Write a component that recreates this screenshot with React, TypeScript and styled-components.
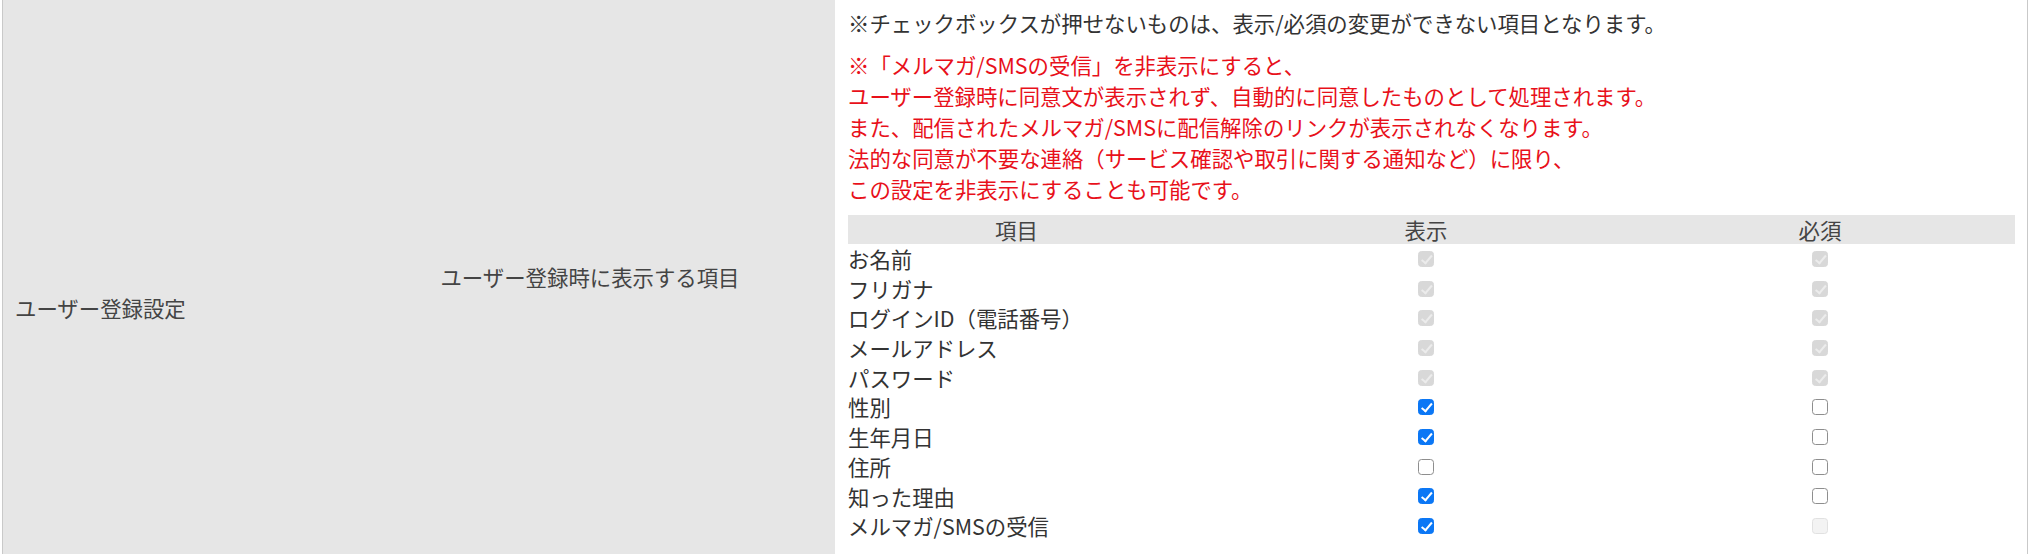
import React, { useState } from 'react'
import styled, { createGlobalStyle, css } from 'styled-components'

const GlobalStyle = createGlobalStyle`
  html, body {
    margin: 0;
    padding: 0;
    overflow: hidden;
    background: #fff;
  }
  body {
    font-family: "Noto Sans CJK JP", "Noto Sans", sans-serif;
    font-size: 21.4px;
    color: #333;
  }
`

const SettingTable = styled.div`
  display: grid;
  grid-template-columns: 342px 490px 1fr;
  grid-template-rows: 552px 62px;
  margin: 0 1px 0 2px;
  border-left: 1px solid #c9c9c9;
  border-right: 1px solid #c9c9c9;
`

const GroupHead = styled.div`
  grid-row: 1 / span 2;
  display: flex;
  align-items: center;
  padding: 0 12px;
  background: #e6e6e6;
  color: #444;
`

const ItemHead = styled.div`
  display: flex;
  align-items: center;
  justify-content: center;
  background: #e6e6e6;
  color: #444;
`

const ItemCell = styled.div`
  padding: 7px 12px 12px 13px;
  background: #fff;
`

const Note = styled.p<{ $alert?: boolean }>`
  margin: 0 0 11px;
  line-height: 31px;
  white-space: nowrap;
  color: ${p => (p.$alert ? '#e8101a' : '#333')};
`

const FieldTable = styled.div`
  margin-top: 5px;
`

const FieldRow = styled.div<{ $head?: boolean }>`
  display: grid;
  grid-template-columns: 337px 482px 306px 1fr;
  align-items: center;
  height: ${p => (p.$head ? '29px' : '29.7px')};
  ${p =>
    p.$head &&
    css`
      background: #e6e6e6;
      color: #444;
    `}
`

const HeadLabel = styled.div`
  text-align: center;
  line-height: 29px;
`

const FieldLabel = styled.div`
  line-height: 29.7px;
  white-space: nowrap;
`

const CheckCell = styled.div`
  display: flex;
  justify-content: center;
  align-items: center;
`

const Check = styled.input`
  appearance: none;
  position: relative;
  width: 16px;
  height: 16px;
  margin: 0;
  border-radius: 3.5px;
  border: 1px solid #8e8e8e;
  background: #fff;
  cursor: pointer;

  &:checked {
    border-color: #0b77f5;
    background: #0b77f5;
  }
  &:checked::after {
    content: '';
    position: absolute;
    left: 4.5px;
    top: 1px;
    width: 4px;
    height: 8.5px;
    border: solid #fff;
    border-width: 0 2.6px 2.6px 0;
    transform: rotate(40deg);
  }
  &:disabled {
    cursor: default;
    border-color: #e1e1e1;
    background: #f3f3f3;
  }
  &:disabled:checked {
    border-color: #d8d8d8;
    background: #d8d8d8;
  }
  &:disabled:checked::after {
    border-color: #ececec;
    border-width: 0 2px 2px 0;
  }
`

type Mark = 'on' | 'off' | 'lockedOn' | 'lockedOff'

interface Field {
  label: string
  show: Mark
  required: Mark
}

const initialFields: Field[] = [
  { label: 'お名前', show: 'lockedOn', required: 'lockedOn' },
  { label: 'フリガナ', show: 'lockedOn', required: 'lockedOn' },
  { label: 'ログインID（電話番号）', show: 'lockedOn', required: 'lockedOn' },
  { label: 'メールアドレス', show: 'lockedOn', required: 'lockedOn' },
  { label: 'パスワード', show: 'lockedOn', required: 'lockedOn' },
  { label: '性別', show: 'on', required: 'off' },
  { label: '生年月日', show: 'on', required: 'off' },
  { label: '住所', show: 'off', required: 'off' },
  { label: '知った理由', show: 'on', required: 'off' },
  { label: 'メルマガ/SMSの受信', show: 'on', required: 'lockedOff' }
]

const flip = (m: Mark): Mark => (m === 'on' ? 'off' : m === 'off' ? 'on' : m)

const MarkBox = ({ mark, onToggle }: { mark: Mark; onToggle: () => void }) => (
  <CheckCell>
    <Check
      type="checkbox"
      checked={mark === 'on' || mark === 'lockedOn'}
      disabled={mark === 'lockedOn' || mark === 'lockedOff'}
      onChange={onToggle}
    />
  </CheckCell>
)

export default function App() {
  const [fields, setFields] = useState(initialFields)

  const toggle = (index: number, key: 'show' | 'required') => {
    setFields(prev =>
      prev.map((f, i) => (i === index ? { ...f, [key]: flip(f[key]) } : f))
    )
  }

  return (
    <>
      <GlobalStyle />
      <SettingTable>
        <GroupHead>ユーザー登録設定</GroupHead>
        <ItemHead>ユーザー登録時に表示する項目</ItemHead>
        <ItemCell>
          <Note>
            ※チェックボックスが押せないものは、表示/必須の変更ができない項目となります。
          </Note>
          <Note $alert>
            ※「メルマガ/SMSの受信」を非表示にすると、
            <br />
            ユーザー登録時に同意文が表示されず、自動的に同意したものとして処理されます。
            <br />
            また、配信されたメルマガ/SMSに配信解除のリンクが表示されなくなります。
            <br />
            法的な同意が不要な連絡（サービス確認や取引に関する通知など）に限り、
            <br />
            この設定を非表示にすることも可能です。
          </Note>
          <FieldTable>
            <FieldRow $head>
              <HeadLabel>項目</HeadLabel>
              <HeadLabel>表示</HeadLabel>
              <HeadLabel>必須</HeadLabel>
              <div />
            </FieldRow>
            {fields.map((f, i) => (
              <FieldRow key={f.label}>
                <FieldLabel>{f.label}</FieldLabel>
                <MarkBox mark={f.show} onToggle={() => toggle(i, 'show')} />
                <MarkBox mark={f.required} onToggle={() => toggle(i, 'required')} />
                <div />
              </FieldRow>
            ))}
          </FieldTable>
        </ItemCell>
        <ItemHead />
        <ItemCell />
      </SettingTable>
    </>
  )
}
